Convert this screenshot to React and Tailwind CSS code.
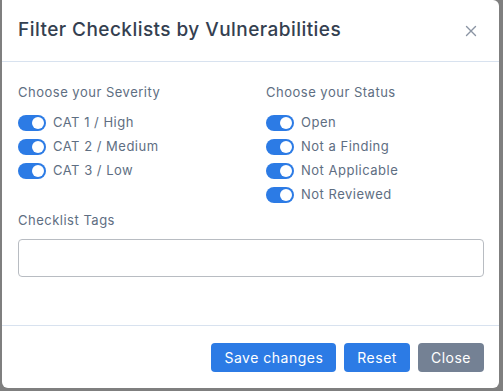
import { useState } from 'react'

const font = { fontFamily: 'Inter, "Noto Sans", sans-serif' }

function Toggle({ on, onChange }) {
  return (
    <button
      onClick={onChange}
      className={`relative w-[28px] h-[16px] rounded-full flex-shrink-0 transition ${on ? 'bg-[#2c7be5]' : 'bg-[#d8e2ef]'}`}
    >
      <span className={`absolute top-[2px] w-[12px] h-[12px] rounded-full bg-white transition-all ${on ? 'left-[14px]' : 'left-[2px]'}`} />
    </button>
  )
}

function SwitchList({ title, items, className }) {
  const [vals, setVals] = useState(items.map(() => true))
  return (
    <div className={className}>
      <p className="text-[13px] text-[#5e6e82] tracking-[0.5px] mb-[12px]">{title}</p>
      <div className="flex flex-col gap-[8px]">
        {items.map((label, i) => (
          <label key={label} className="flex items-center gap-[7px] text-[13px] text-[#5e6e82] tracking-[0.5px] h-[16px]">
            <Toggle on={vals[i]} onChange={() => setVals(v => v.map((x, j) => (j === i ? !x : x)))} />
            {label}
          </label>
        ))}
      </div>
    </div>
  )
}

export default function App() {
  return (
    <div className="w-[503px] h-[391px] bg-[#7f7f7f] overflow-hidden" style={font}>
      <div className="ml-[2px] w-[497px] h-[388px] bg-white rounded-b-[6px] rounded-tr-[6px] flex flex-col">

        {/* Header */}
        <div className="flex items-center justify-between pl-[16px] pr-[18px] h-[62px] border-b border-[#d8e2ef]">
          <h3 className="text-[19px] text-[#344050] font-medium tracking-[0.45px]">Filter Checklists by Vulnerabilities</h3>
          <button className="text-[#8a94a3] p-1">
            <svg width="12" height="12" viewBox="0 0 12 12" stroke="currentColor" strokeWidth="1.4" strokeLinecap="round">
              <path d="M1.5 1.5l9 9M10.5 1.5l-9 9" />
            </svg>
          </button>
        </div>

        {/* Body */}
        <div className="flex-1 px-[16px] pt-[21px]">
          <div className="flex">
            <SwitchList className="w-[248px]" title="Choose your Severity" items={['CAT 1 / High', 'CAT 2 / Medium', 'CAT 3 / Low']} />
            <SwitchList className="flex-1" title="Choose your Status" items={['Open', 'Not a Finding', 'Not Applicable', 'Not Reviewed']} />
          </div>
          <p className="text-[13px] text-[#5e6e82] tracking-[0.5px] mt-[8px]">Checklist Tags</p>
          <input className="mt-[9px] w-[466px] h-[38px] border border-[#b8bcc2] rounded-[4px] outline-none px-3 text-sm" />
        </div>

        {/* Footer */}
        <div className="flex justify-end gap-[8px] px-[15px] h-[63px] items-center border-t border-[#d8e2ef]">
          <button className="h-[29px] px-[13px] rounded-[4px] bg-[#2c7be5] text-white text-[14px] tracking-[0.5px]">Save changes</button>
          <button className="h-[29px] px-[13px] rounded-[4px] bg-[#2c7be5] text-white text-[14px] tracking-[0.5px]">Reset</button>
          <button className="h-[29px] px-[13px] rounded-[4px] bg-[#748194] text-white text-[14px] tracking-[0.5px]">Close</button>
        </div>
      </div>
    </div>
  )
}
